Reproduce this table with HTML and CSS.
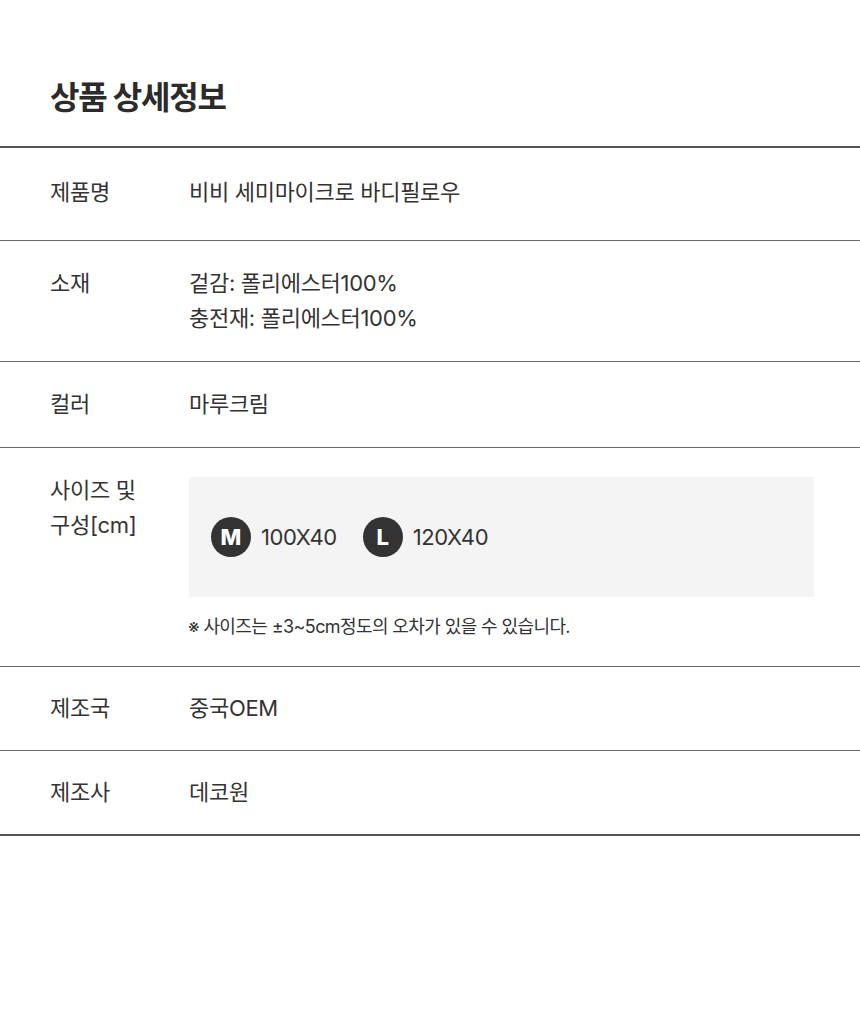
FILE: index.html
```html
<!DOCTYPE html>
<html lang="ko">
<head>
<meta charset="utf-8">
<title>상품 상세정보</title>
<link rel="stylesheet" href="styles.css">
</head>
<body>
<section class="detail">
  <h2 class="title">상품 상세정보</h2>
  <div class="table">
    <div class="row first">
      <div class="label">제품명</div>
      <div class="value">비비 세미마이크로 바디필로우</div>
    </div>
    <div class="row">
      <div class="label">소재</div>
      <div class="value">겉감: 폴리에스터100%<br>충전재: 폴리에스터100%</div>
    </div>
    <div class="row">
      <div class="label">컬러</div>
      <div class="value">마루크림</div>
    </div>
    <div class="row">
      <div class="label">사이즈 및<br>구성[cm]</div>
      <div class="value">
        <div class="size-box">
          <div class="size"><span class="badge">M</span><span class="dim">100X40</span></div>
          <div class="size"><span class="badge">L</span><span class="dim">120X40</span></div>
        </div>
        <p class="note">※ 사이즈는 ±3~5cm정도의 오차가 있을 수 있습니다.</p>
      </div>
    </div>
    <div class="row tight">
      <div class="label">제조국</div>
      <div class="value">중국OEM</div>
    </div>
    <div class="row tight last">
      <div class="label">제조사</div>
      <div class="value">데코원</div>
    </div>
  </div>
</section>
</body>
</html>
```

FILE: styles.css
```css
html, body {
  margin: 0;
  padding: 0;
  background: #ffffff;
}

body {
  font-family: "Inter", "Noto Sans CJK KR", sans-serif;
  color: #333333;
}

.detail {
  width: 860px;
}

.title {
  margin: 0;
  padding: 78px 0 28px 50px;
  font-size: 32px;
  line-height: 40px;
  font-weight: 700;
  letter-spacing: -1.2px;
  color: #2b2b2b;
}

.table {
  border-top: 2px solid #555555;
  border-bottom: 2px solid #555555;
}

.row {
  display: flex;
  padding: 25px 0 25px 50px;
  font-size: 22px;
  line-height: 35px;
  letter-spacing: -0.3px;
  border-bottom: 1px solid #6a6a6a;
}

.row.first {
  padding-top: 27px;
  padding-bottom: 30px;
}

.row.tight {
  padding-top: 24px;
  padding-bottom: 24px;
}

.row.last {
  border-bottom: none;
}

.label {
  width: 139px;
  flex: none;
}

.value {
  flex: 1;
  padding-right: 46px;
}

.size-box {
  margin-top: 4px;
  height: 120px;
  background: #f4f4f4;
  display: flex;
  align-items: center;
  gap: 26px;
  padding-left: 22px;
  box-sizing: border-box;
}

.size {
  display: flex;
  align-items: center;
  gap: 10px;
}

.badge {
  width: 40px;
  height: 40px;
  border-radius: 50%;
  background: #333333;
  color: #ffffff;
  font-weight: 800;
  font-size: 22px;
  letter-spacing: 0;
  display: flex;
  align-items: center;
  justify-content: center;
}

.dim {
  font-size: 22px;
  letter-spacing: -0.4px;
}

.note {
  margin: 16px 0 0 -1px;
  font-size: 18px;
  line-height: 28px;
  letter-spacing: -0.6px;
}
```
